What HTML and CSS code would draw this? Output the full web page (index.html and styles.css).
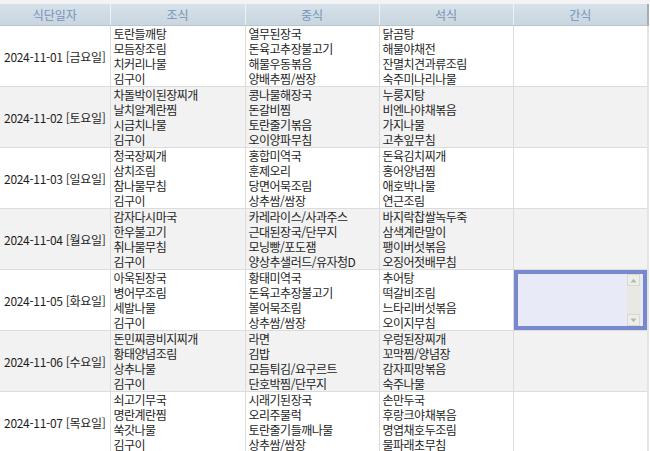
FILE: index.html
```html
<!DOCTYPE html>
<html lang="ko">
<head>
<meta charset="utf-8">
<link rel="stylesheet" href="styles.css">
</head>
<body>
<div class="page">
<table class="meal">
<colgroup>
<col class="c-date"><col class="c-m1"><col class="c-m2"><col class="c-m3"><col class="c-m4">
</colgroup>
<thead>
<tr><th>식단일자</th><th>조식</th><th>중식</th><th>석식</th><th class="last">간식</th></tr>
</thead>
<tbody>
<tr>
<td class="date">2024-11-01 [금요일]</td>
<td>토란들깨탕<br>모듬장조림<br>치커리나물<br>김구이</td>
<td>열무된장국<br>돈육고추장불고기<br>해물우동볶음<br>양배추찜/쌈장</td>
<td>닭곰탕<br>해물야채전<br>잔멸치견과류조림<br>숙주미나리나물</td>
<td class="last"></td>
</tr>
<tr class="alt">
<td class="date">2024-11-02 [토요일]</td>
<td>차돌박이된장찌개<br>날치알계란찜<br>시금치나물<br>김구이</td>
<td>콩나물해장국<br>돈갈비찜<br>토란줄기볶음<br>오이양파무침</td>
<td>누룽지탕<br>비엔나야채볶음<br>가지나물<br>고추잎무침</td>
<td class="last"></td>
</tr>
<tr>
<td class="date">2024-11-03 [일요일]</td>
<td>청국장찌개<br>삼치조림<br>참나물무침<br>김구이</td>
<td>홍합미역국<br>훈제오리<br>당면어묵조림<br>상추쌈/쌈장</td>
<td>돈육김치찌개<br>홍어양념찜<br>애호박나물<br>연근조림</td>
<td class="last"></td>
</tr>
<tr class="alt">
<td class="date">2024-11-04 [월요일]</td>
<td>감자다시마국<br>한우불고기<br>취나물무침<br>김구이</td>
<td class="clip">카레라이스/사과주스<br>근대된장국/단무지<br>모닝빵/포도잼<br>양상추샐러드/유자청D</td>
<td>바지락찹쌀녹두죽<br>삼색계란말이<br>팽이버섯볶음<br>오징어젓배무침</td>
<td class="last"></td>
</tr>
<tr>
<td class="date">2024-11-05 [화요일]</td>
<td>아욱된장국<br>병어무조림<br>세발나물<br>김구이</td>
<td>황태미역국<br>돈육고추장불고기<br>볼어묵조림<br>상추쌈/쌈장</td>
<td>추어탕<br>떡갈비조림<br>느타리버섯볶음<br>오이지무침</td>
<td class="last edit">
<div class="box">
<textarea class="ta" aria-label="간식"></textarea>
<div class="sb">
<span class="btn up"><svg width="7" height="5" viewBox="0 0 7 5"><path d="M0.5 4.5 L3.5 0.8 L6.5 4.5 Z" fill="#b5b8b0"/></svg></span>
<span class="track"></span>
<span class="btn down"><svg width="7" height="5" viewBox="0 0 7 5"><path d="M0.5 0.5 L3.5 4.2 L6.5 0.5 Z" fill="#b5b8b0"/></svg></span>
</div>
</div>
</td>
</tr>
<tr class="alt">
<td class="date">2024-11-06 [수요일]</td>
<td>돈민찌콩비지찌개<br>황태양념조림<br>상추나물<br>김구이</td>
<td>라면<br>김밥<br>모듬튀김/요구르트<br>단호박찜/단무지</td>
<td>우렁된장찌개<br>꼬막찜/양념장<br>감자피망볶음<br>숙주나물</td>
<td class="last"></td>
</tr>
<tr>
<td class="date">2024-11-07 [목요일]</td>
<td>쇠고기무국<br>명란계란찜<br>쑥갓나물<br>김구이</td>
<td>시래기된장국<br>오리주물럭<br>토란줄기들깨나물<br>상추쌈/쌈장</td>
<td>손만두국<br>후랑크야채볶음<br>명엽채호두조림<br>물파래초무침</td>
<td class="last"></td>
</tr>
</tbody>
</table>
</div>
</body>
</html>
```
FILE: styles.css
```css
html, body {
  margin: 0;
  padding: 0;
  background: #ffffff;
}
.page {
  padding-top: 4px;
  background: linear-gradient(#f3f3f3 0, #f3f3f3 4px, #ffffff 4px);
  width: 650px;
  height: 451px;
  overflow: hidden;
}
.meal {
  border-collapse: collapse;
  table-layout: fixed;
  width: 648px;
  font-family: "Noto Sans CJK KR", "DejaVu Sans", sans-serif;
  font-size: 12px;
  letter-spacing: -0.5px;
  color: #1e1e1e;
}
.c-date { width: 110px; }
.c-m1 { width: 135px; }
.c-m2 { width: 134px; }
.c-m3 { width: 134px; }
.c-m4 { width: 135px; }
.meal th {
  height: 21px;
  padding: 0;
  font-weight: normal;
  font-size: 12px;
  letter-spacing: 0;
  color: #7393b6;
  background: linear-gradient(#d6e1e9, #c9d6df);
  border-right: 1px solid #eef2f5;
  border-bottom: 1px solid #b8c4cc;
  text-align: center;
  line-height: 21px;
}
.meal th.last {
  border-right: 2px solid #a6adb3;
}
.meal td {
  height: 60px;
  padding: 0 0 0 3px;
  line-height: 15px;
  vertical-align: middle;
  border-right: 1px solid #dcdcdc;
  border-bottom: 1px solid #dcdcdc;
  white-space: nowrap;
  overflow: hidden;
}
.meal td.last {
  border-right: 2px solid #e4e4e4;
}
.meal td.date {
  padding: 0;
  text-align: center;
  letter-spacing: -0.3px;
}
.meal tr.alt td {
  background: #f2f2f2;
}
.meal td.clip {
  text-overflow: clip;
}
.meal td.edit {
  padding: 0;
}
.box {
  display: flex;
  height: 60px;
  box-sizing: border-box;
  border: 4px solid #7888cc;
  background: #e8eaf7;
}
.ta {
  flex: 1;
  border: 0;
  margin: 0;
  padding: 0;
  resize: none;
  outline: none;
  background: transparent;
}
.sb {
  width: 13px;
  margin-right: 3px;
  display: flex;
  flex-direction: column;
  background: #e8e9e2;
}
.btn {
  height: 12px;
  display: flex;
  align-items: center;
  justify-content: center;
  background: #edeee8;
  border: 1px solid #d8d9d2;
  box-sizing: border-box;
}
.track {
  flex: 1;
}
```
